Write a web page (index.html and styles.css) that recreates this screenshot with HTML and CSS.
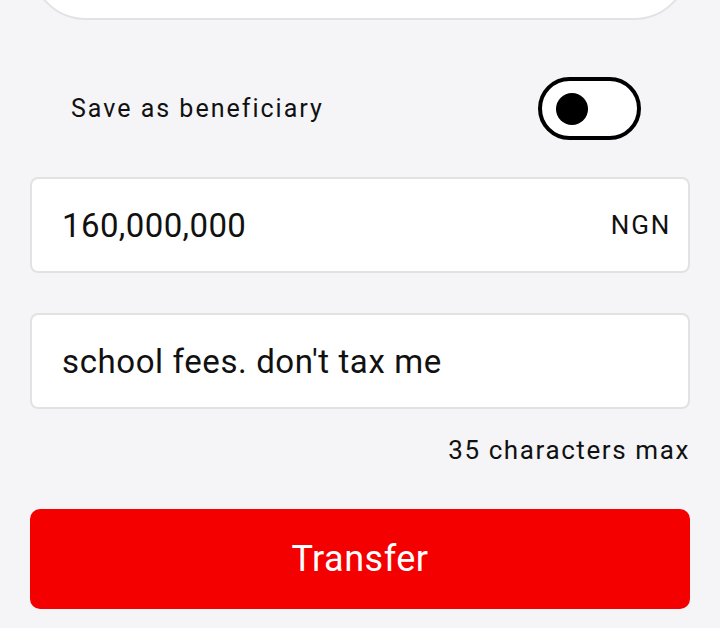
FILE: index.html
```html
<!DOCTYPE html>
<html lang="en">
<head>
    <meta charset="UTF-8">
    <meta name="viewport" content="width=device-width, initial-scale=1.0">
    <title>Transfer</title>
    <link rel="stylesheet" href="styles.css">
</head>
<body>
    <div class="top-card"></div>

    <div class="beneficiary-row">
        <span class="beneficiary-label">Save as beneficiary</span>
        <div class="toggle"><span class="knob"></span></div>
    </div>

    <div class="field amount-field">
        <span class="field-value">160,000,000</span>
        <span class="currency">NGN</span>
    </div>

    <div class="field narration-field">
        <span class="field-value">school fees. don't tax me</span>
    </div>
    <div class="hint">35 characters max</div>

    <button class="transfer-btn">Transfer</button>
</body>
</html>
```

FILE: styles.css
```css
html, body {
    margin: 0;
    padding: 0;
}
body {
    background-color: #f5f5f7;
    font-family: Roboto, "Noto Sans", sans-serif;
    color: #111;
    padding: 0 30px;
    height: 628px;
    overflow: hidden;
}
.top-card {
    height: 80px;
    margin: -60px 0 0 0;
    background: #fff;
    border: 2px solid #e2e2e4;
    border-radius: 0 0 56px 56px;
    box-sizing: border-box;
}
.beneficiary-row {
    display: flex;
    align-items: center;
    justify-content: space-between;
    margin-top: 57px;
    padding: 0 49px 0 41px;
    height: 63px;
}
.beneficiary-label {
    font-size: 25px;
    letter-spacing: 2px;
}
.toggle {
    width: 103px;
    height: 63px;
    box-sizing: border-box;
    border: 4px solid #000;
    border-radius: 32px;
    background: #fff;
    display: flex;
    align-items: center;
    padding-left: 14px;
}
.knob {
    width: 32px;
    height: 32px;
    border-radius: 50%;
    background: #000;
}
.field {
    display: flex;
    align-items: center;
    justify-content: space-between;
    background: #fff;
    border: 2px solid #e2e2e4;
    border-radius: 8px;
    box-sizing: border-box;
    height: 96px;
    padding: 0 17px 0 30px;
}
.amount-field {
    margin-top: 37px;
}
.narration-field {
    margin-top: 40px;
}
.field-value {
    font-size: 33px;
    letter-spacing: 0.6px;
}
.amount-field .field-value {
    letter-spacing: 0.4px;
}
.currency {
    font-size: 26px;
    letter-spacing: 1.8px;
}
.hint {
    text-align: right;
    font-size: 26px;
    letter-spacing: 1.6px;
    margin-top: 24px;
    line-height: 34px;
}
.transfer-btn {
    display: block;
    width: 100%;
    height: 100px;
    margin-top: 42px;
    background: #f50000;
    color: #fff;
    border: none;
    border-radius: 10px;
    font-family: Roboto, sans-serif;
    font-size: 36px;
    letter-spacing: 0.5px;
}
```
